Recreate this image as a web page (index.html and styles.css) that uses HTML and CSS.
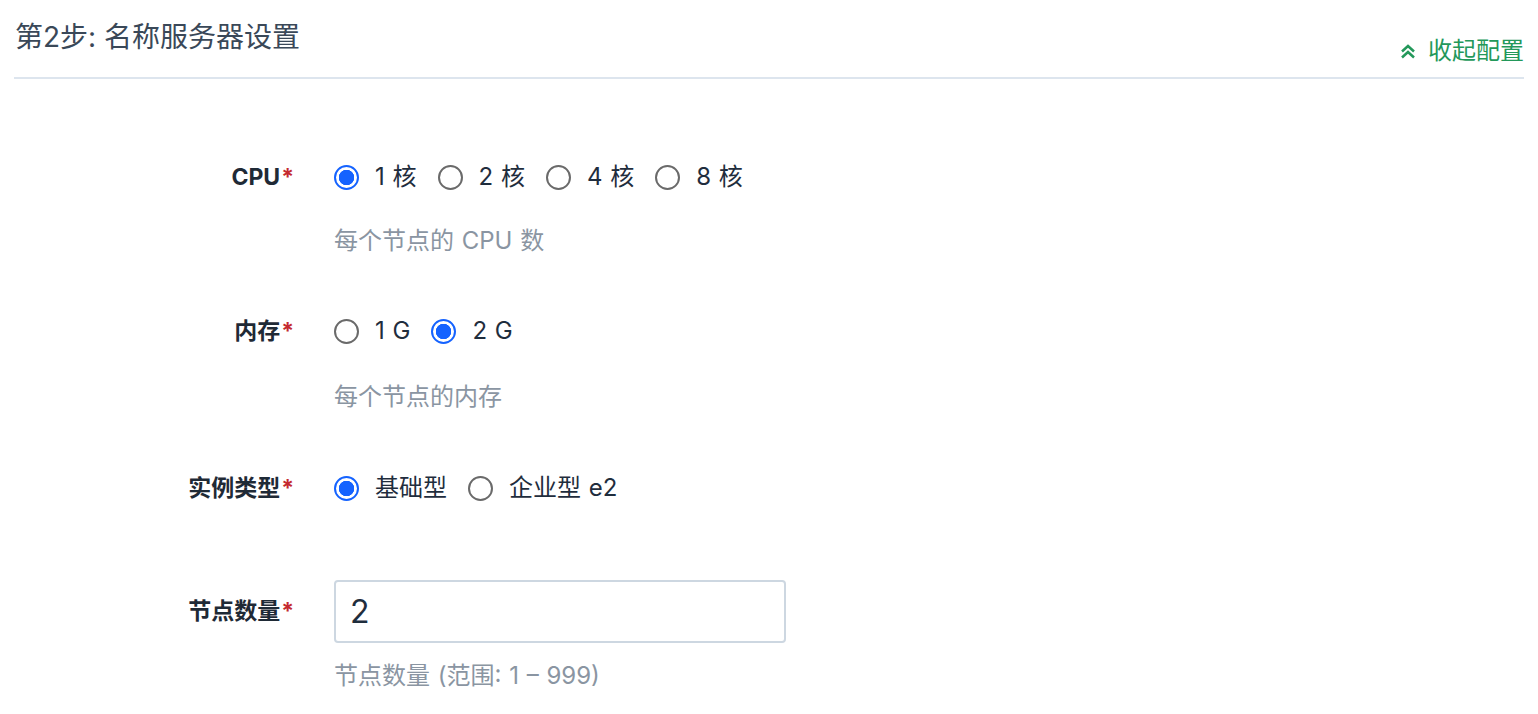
FILE: index.html
```html
<!DOCTYPE html>
<html lang="zh-CN">
<head>
<meta charset="utf-8">
<title>名称服务器设置</title>
<link rel="stylesheet" href="styles.css">
</head>
<body>
<div class="page">
  <div class="header">
    <h2 class="title">第2步: 名称服务器设置</h2>
    <a class="toggle" href="#">
      <svg class="toggle-icon" width="16" height="15" viewBox="0 0 16 15"><path d="M2 7.5 L8 2 L14 7.5 M2 13.5 L8 8 L14 13.5" fill="none" stroke="currentColor" stroke-width="2.5" stroke-linejoin="miter"/></svg>
      <span>收起配置</span>
    </a>
  </div>

  <div class="form">
    <div class="row row-cpu">
      <div class="label">CPU<span class="req">*</span></div>
      <div class="control">
        <div class="radios">
          <label class="radio"><span class="dot checked"></span><span>1 核</span></label>
          <label class="radio"><span class="dot"></span><span>2 核</span></label>
          <label class="radio"><span class="dot"></span><span>4 核</span></label>
          <label class="radio"><span class="dot"></span><span>8 核</span></label>
        </div>
        <div class="help">每个节点的 CPU 数</div>
      </div>
    </div>

    <div class="row row-mem">
      <div class="label">内存<span class="req">*</span></div>
      <div class="control">
        <div class="radios">
          <label class="radio"><span class="dot"></span><span>1 G</span></label>
          <label class="radio"><span class="dot checked"></span><span>2 G</span></label>
        </div>
        <div class="help">每个节点的内存</div>
      </div>
    </div>

    <div class="row row-type">
      <div class="label">实例类型<span class="req">*</span></div>
      <div class="control">
        <div class="radios">
          <label class="radio"><span class="dot checked"></span><span>基础型</span></label>
          <label class="radio"><span class="dot"></span><span>企业型 e2</span></label>
        </div>
      </div>
    </div>

    <div class="row row-count">
      <div class="label label-input">节点数量<span class="req">*</span></div>
      <div class="control">
        <div class="input">2</div>
        <div class="help help-input">节点数量 (范围: 1 – 999)</div>
      </div>
    </div>
  </div>
</div>
</body>
</html>
```

FILE: styles.css
```css
html, body {
  margin: 0;
  padding: 0;
  background: #ffffff;
}

body {
  font-family: "Inter", "Noto Sans CJK SC", sans-serif;
  color: #1f2d3d;
}

.page {
  margin: 0 14px;
}

.header {
  display: flex;
  justify-content: space-between;
  align-items: flex-start;
  height: 77px;
  border-bottom: 2px solid #dde5ee;
}

.title {
  margin: 17px 0 0 1px;
  font-size: 28px;
  line-height: 40px;
  font-weight: 400;
  color: #3a4858;
}

.toggle {
  display: flex;
  align-items: center;
  gap: 12px;
  margin-top: 36px;
  height: 30px;
  font-size: 24px;
  line-height: 30px;
  color: #23985a;
  text-decoration: none;
}

.toggle-icon {
  display: block;
}

.form {
  padding-top: 78px;
}

.row {
  display: grid;
  grid-template-columns: 280px 1fr;
  column-gap: 40px;
  align-items: start;
}

.row-mem {
  margin-top: 50px;
}

.row-type {
  margin-top: 51px;
}

.row-count {
  margin-top: 72px;
}

.label {
  text-align: right;
  font-size: 23px;
  line-height: 40px;
  font-weight: 700;
  color: #1f2a36;
}

.label-input {
  line-height: 63px;
}

.req {
  color: #c42a2f;
  margin-left: 1px;
}

.radios {
  display: flex;
  align-items: center;
  height: 40px;
}

.radio {
  display: flex;
  align-items: center;
  gap: 16px;
  margin-right: 21px;
  font-size: 24px;
  line-height: 40px;
  word-spacing: 1px;
  color: #1f2d3d;
}

.dot {
  box-sizing: border-box;
  width: 25px;
  height: 25px;
  border: 2px solid #6a6a6a;
  border-radius: 50%;
  background: #ffffff;
}

.dot.checked {
  border-color: #1563ff;
  background: radial-gradient(circle, #1563ff 0 7.5px, #ffffff 8px);
}

.help {
  margin-top: 24px;
  font-size: 24px;
  line-height: 40px;
  word-spacing: 1px;
  color: #8a95a2;
}

.row-mem .help {
  margin-top: 26px;
}

.input {
  box-sizing: border-box;
  width: 452px;
  height: 63px;
  border: 2px solid #cdd7e1;
  border-radius: 4px;
  padding-left: 14px;
  font-size: 32px;
  line-height: 59px;
  color: #1f2d3d;
}

.help-input {
  margin-top: 13px;
}
```
